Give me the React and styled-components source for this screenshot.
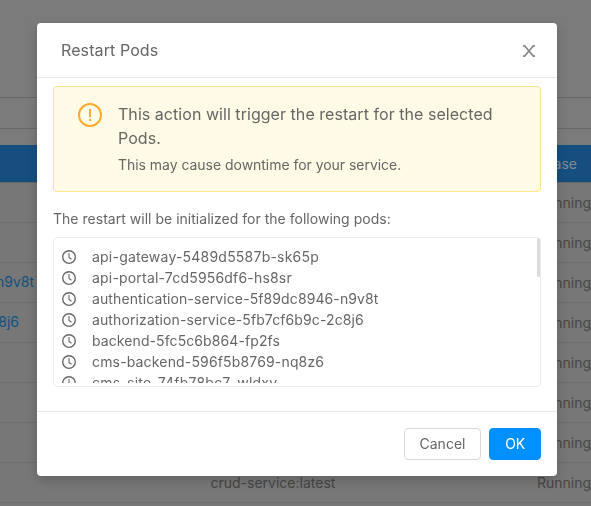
import React from "react";
import styled, { createGlobalStyle } from "styled-components";

const GlobalStyle = createGlobalStyle`
  *, *::before, *::after { box-sizing: border-box; }
  body {
    margin: 0;
    overflow: hidden;
    font-family: Inter, "Liberation Sans", sans-serif;
    font-size: 14px;
    line-height: 21px;
    color: #666;
  }
`;

const Page = styled.div`
  height: 506px;
  overflow: hidden;
  background: #7b7b7b;
`;

const Banner = styled.div`
  height: 98px;
  border-bottom: 1px solid #686868;
`;

const Toolbar = styled.div`
  height: 31px;
  border-bottom: 1px solid #686868;
`;

const Table = styled.div`
  margin-top: 16px;
  background: #777;
`;

const TableRow = styled.div`
  display: grid;
  grid-template-columns: 210px 327px 54px;
  align-items: center;
  height: 40px;
  border-bottom: 1px solid #6d6d6d;
  color: #464646;
  white-space: nowrap;
`;

const TableHead = styled(TableRow)`
  height: 38px;
  background: #154f80;
  border-bottom-color: #666;
  color: #898989;
`;

const PodLink = styled.span`
  display: flex;
  justify-content: flex-end;
  width: ${({ $width }) => $width}px;
  padding-bottom: 2px;
  color: #125180;
`;

const Cell = styled.span`
  padding-left: ${({ $indent }) => $indent || 0}px;
`;

const HeadLabel = styled.span`
  display: flex;
  justify-content: flex-end;
  width: 40px;
`;

const Overlay = styled.div`
  position: fixed;
  inset: 0;
  padding: 23px 34px 0 37px;
`;

const Dialog = styled.section`
  display: flex;
  flex-direction: column;
  width: 520px;
  height: 453px;
  background: #fff;
  border-radius: 4px;
  box-shadow: 0 4px 12px rgba(0, 0, 0, 0.18);
`;

const DialogHeader = styled.header`
  display: flex;
  align-items: center;
  justify-content: space-between;
  height: 55px;
  padding: 0 21px 0 24px;
  border-bottom: 1px solid #e8e8e8;
`;

const Title = styled.h1`
  margin: 0;
  font-size: 16px;
  font-weight: 400;
  line-height: 22px;
  letter-spacing: 0.1px;
`;

const CloseButton = styled.button`
  display: flex;
  padding: 2px 0 0;
  border: 0;
  background: none;
  color: #858585;
`;

const DialogBody = styled.div`
  flex: 1;
  padding: 8px 16px 0;
`;

const Alert = styled.div`
  display: flex;
  gap: 16px;
  height: 106px;
  padding: 15px 20px 0 24px;
  border: 1px solid #ffe58f;
  border-radius: 4px;
  background: #fffbe6;
`;

const AlertIcon = styled.svg`
  flex: none;
  width: 24px;
  height: 24px;
  margin-top: 1px;
  color: #ffab2e;
`;

const AlertTitle = styled.div`
  margin-bottom: 4px;
  font-size: 16px;
  line-height: 24px;
  letter-spacing: 0.045px;
`;

const AlertText = styled.div`
  letter-spacing: -0.035px;
`;

const Intro = styled.p`
  margin: 16px 0 8px;
  letter-spacing: 0.02px;
`;

const PodPanel = styled.div`
  display: flex;
  justify-content: space-between;
  height: 150px;
  padding: 0 0 3px 8px;
  border: 1px solid #ededed;
  border-radius: 4px;
`;

const PodList = styled.ul`
  flex: 1;
  margin: 0;
  padding: 8px 0 0;
  overflow: hidden;
  list-style: none;
`;

const PodItem = styled.li`
  display: flex;
  align-items: center;
  gap: 16px;
  height: 21px;
  letter-spacing: ${({ $spacing }) => $spacing}px;
`;

const ClockIcon = styled.svg`
  width: 14px;
  height: 14px;
`;

const ScrollThumb = styled.div`
  width: 3px;
  height: 39px;
  border-radius: 2px;
  background: #dadada;
`;

const DialogFooter = styled.footer`
  display: flex;
  justify-content: flex-end;
  gap: 8px;
  height: 65px;
  padding: 16px;
  border-top: 1px solid #e8e8e8;
`;

const Button = styled.button`
  width: ${({ $primary }) => ($primary ? 52 : 77)}px;
  height: 32px;
  padding: 0 0 2px;
  border: 1px solid ${({ $primary }) => ($primary ? "#0091ff" : "#d9d9d9")};
  border-radius: 4px;
  background: ${({ $primary }) => ($primary ? "#0091ff" : "#fff")};
  color: ${({ $primary }) => ($primary ? "#fff" : "#666")};
  font: inherit;
  letter-spacing: ${({ $primary }) => ($primary ? -0.3 : 0)}px;
`;

const pods = [
  { name: "api-gateway-5489d5587b-sk65p", spacing: 0.22 },
  { name: "api-portal-7cd5956df6-hs8sr", spacing: 0.19 },
  { name: "authentication-service-5f89dc8946-n9v8t", spacing: 0.1 },
  { name: "authorization-service-5fb7cf6b9c-2c8j6", spacing: 0.11 },
  { name: "backend-5fc5c6b864-fp2fs", spacing: 0.09 },
  { name: "cms-backend-596f5b8769-nq8z6", spacing: 0.16 },
  { name: "cms-site-74fb78bc7-wldxv", spacing: 0.23 },
];

const tableRows = [
  {},
  {},
  { pod: pods[2].name, width: 34 },
  { pod: pods[3].name, width: 19 },
  {},
  {},
  {},
  { image: "crud-service:latest" },
  {},
];

export default function App() {
  return (
    <>
      <GlobalStyle />
      <Page>
        <Banner />
        <Toolbar />
        <Table>
          <TableHead>
            <span />
            <span />
            <HeadLabel>Phase</HeadLabel>
          </TableHead>
          {tableRows.map((row, index) => (
            <TableRow key={index}>
              <PodLink $width={row.width || 0}>{row.pod}</PodLink>
              <Cell $indent={0.5}>{row.image}</Cell>
              <Cell>{index < 8 ? "Running" : ""}</Cell>
            </TableRow>
          ))}
        </Table>
      </Page>
      <Overlay>
        <Dialog role="dialog" aria-modal="true">
          <DialogHeader>
            <Title>Restart Pods</Title>
            <CloseButton aria-label="Close">
              <svg
                width="14"
                height="14"
                viewBox="0 0 14 14"
                fill="none"
                stroke="currentColor"
                strokeWidth="1.7"
              >
                <path d="M1 1.8h1.6L11.4 12.2H13M13 1.8h-1.6L2.6 12.2H1" />
              </svg>
            </CloseButton>
          </DialogHeader>
          <DialogBody>
            <Alert>
              <AlertIcon
                viewBox="0 0 24 24"
                fill="none"
                stroke="currentColor"
                strokeWidth="2"
              >
                <circle cx="12" cy="12" r="11" />
                <path d="M12 6v8.3M12 16v2" />
              </AlertIcon>
              <div>
                <AlertTitle>
                  This action will trigger the restart for the selected Pods.
                </AlertTitle>
                <AlertText>This may cause downtime for your service.</AlertText>
              </div>
            </Alert>
            <Intro>The restart will be initialized for the following pods:</Intro>
            <PodPanel>
              <PodList>
                {pods.map(({ name, spacing }) => (
                  <PodItem key={name} $spacing={spacing}>
                    <ClockIcon
                      viewBox="0 0 14 14"
                      fill="none"
                      stroke="currentColor"
                      strokeWidth="1.35"
                    >
                      <circle cx="7" cy="7" r="6.3" />
                      <path d="M7 3v4.4L9.5 9.3" strokeWidth="1.1" />
                    </ClockIcon>
                    <span>{name}</span>
                  </PodItem>
                ))}
              </PodList>
              <ScrollThumb />
            </PodPanel>
          </DialogBody>
          <DialogFooter>
            <Button>Cancel</Button>
            <Button $primary>OK</Button>
          </DialogFooter>
        </Dialog>
      </Overlay>
    </>
  );
}
